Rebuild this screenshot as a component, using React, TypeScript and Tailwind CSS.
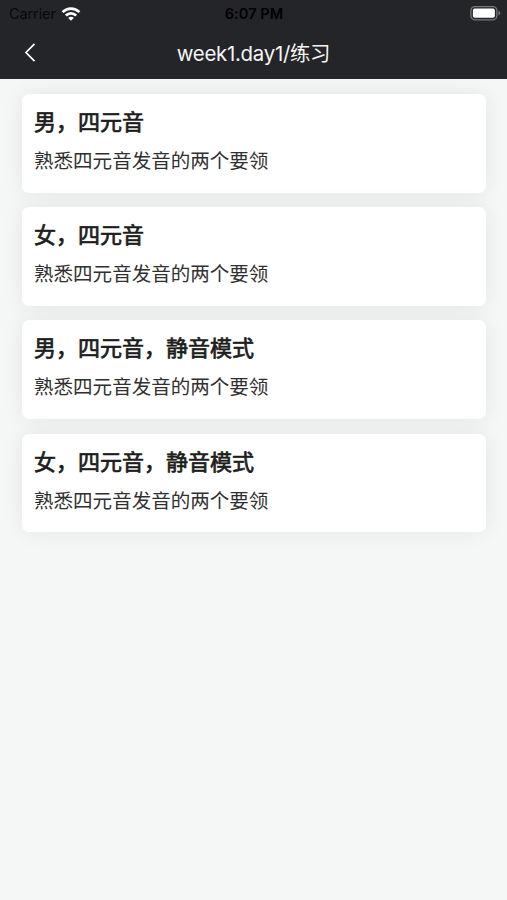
const exercises = [
  { title: "男，四元音", description: "熟悉四元音发音的两个要领" },
  { title: "女，四元音", description: "熟悉四元音发音的两个要领" },
  { title: "男，四元音，静音模式", description: "熟悉四元音发音的两个要领" },
  { title: "女，四元音，静音模式", description: "熟悉四元音发音的两个要领" },
];

function WifiIcon() {
  return (
    <svg className="ml-[5px] h-[15px] w-5" viewBox="0 0 20 15" fill="none" stroke="#fff" strokeWidth="2.7">
      <path d="M1.6 5.1C6.4.4 13.6.4 18.4 5.1" />
      <path d="M4.8 8.5C7.8 5.6 12.2 5.6 15.2 8.5" />
      <path d="M7.2 10.9C8.8 9.4 11.2 9.4 12.8 10.9L10 13.7Z" fill="#fff" stroke="none" />
    </svg>
  );
}

function BatteryIcon() {
  return (
    <svg className="h-4 w-8" viewBox="0 0 32 16" fill="none">
      <rect x="0.9" y="0.6" width="26" height="13.2" rx="4" stroke="#77787a" strokeWidth="1.3" />
      <rect x="2.9" y="2.6" width="22" height="9.2" rx="1.8" fill="#fff" />
      <path d="M28.5 4.8C30.9 5.7 30.9 8.7 28.5 9.6Z" fill="#77787a" />
    </svg>
  );
}

function StatusBar() {
  return (
    <div className="grid h-[27px] grid-cols-3 items-center pl-[9px] pr-[5px] pt-px font-['Inter','Liberation_Sans',sans-serif] text-black">
      <div className="flex items-center text-[14.5px] leading-none tracking-[-0.1px] text-[#08090a]">
        Carrier
        <WifiIcon />
      </div>
      <span className="-ml-[3px] text-center text-[14.5px] font-semibold leading-none tracking-[0.1px]">6:07 PM</span>
      <div className="flex justify-end">
        <BatteryIcon />
      </div>
    </div>
  );
}

export default function App() {
  return (
    <div className="h-[900px] w-[507px] overflow-hidden bg-[#f5f7f7] font-['Noto_Sans_CJK_SC',sans-serif]">
      <header className="h-[79px] bg-[#242528]">
        <StatusBar />
        <div className="grid h-[52px] grid-cols-[60px_1fr_60px] items-center">
          <svg className="ml-6 h-5 w-3" viewBox="0 0 12 20" fill="none" stroke="#fff" strokeWidth="1.7">
            <path d="M10.5 0.8L2 9.5l8.5 8.7" />
          </svg>
          <h1 className="pt-[2px] text-center font-['Inter','Noto_Sans_CJK_SC',sans-serif] text-[20.4px] font-normal leading-7 tracking-[-0.27px] text-[#f5f5f5]">
            week1.day1/练习
          </h1>
        </div>
      </header>
      <main className="flex flex-col gap-[14.7px] pl-[22px] pr-[21px] pt-[15px]">
        {exercises.map((exercise) => (
          <article
            key={exercise.title}
            className="h-[98.5px] rounded-[7px] bg-white pl-[12px] pt-[10px] shadow-[0_0_22px_rgba(0,0,0,0.07)]"
          >
            <h2 className="text-[22px] font-normal leading-[32px] text-[#1d1d1d] [-webkit-text-stroke:0.7px_#1d1d1d]">
              {exercise.title}
            </h2>
            <p className="mt-[10px] text-[19.55px] leading-[28px] text-[#303030]">{exercise.description}</p>
          </article>
        ))}
      </main>
    </div>
  );
}
